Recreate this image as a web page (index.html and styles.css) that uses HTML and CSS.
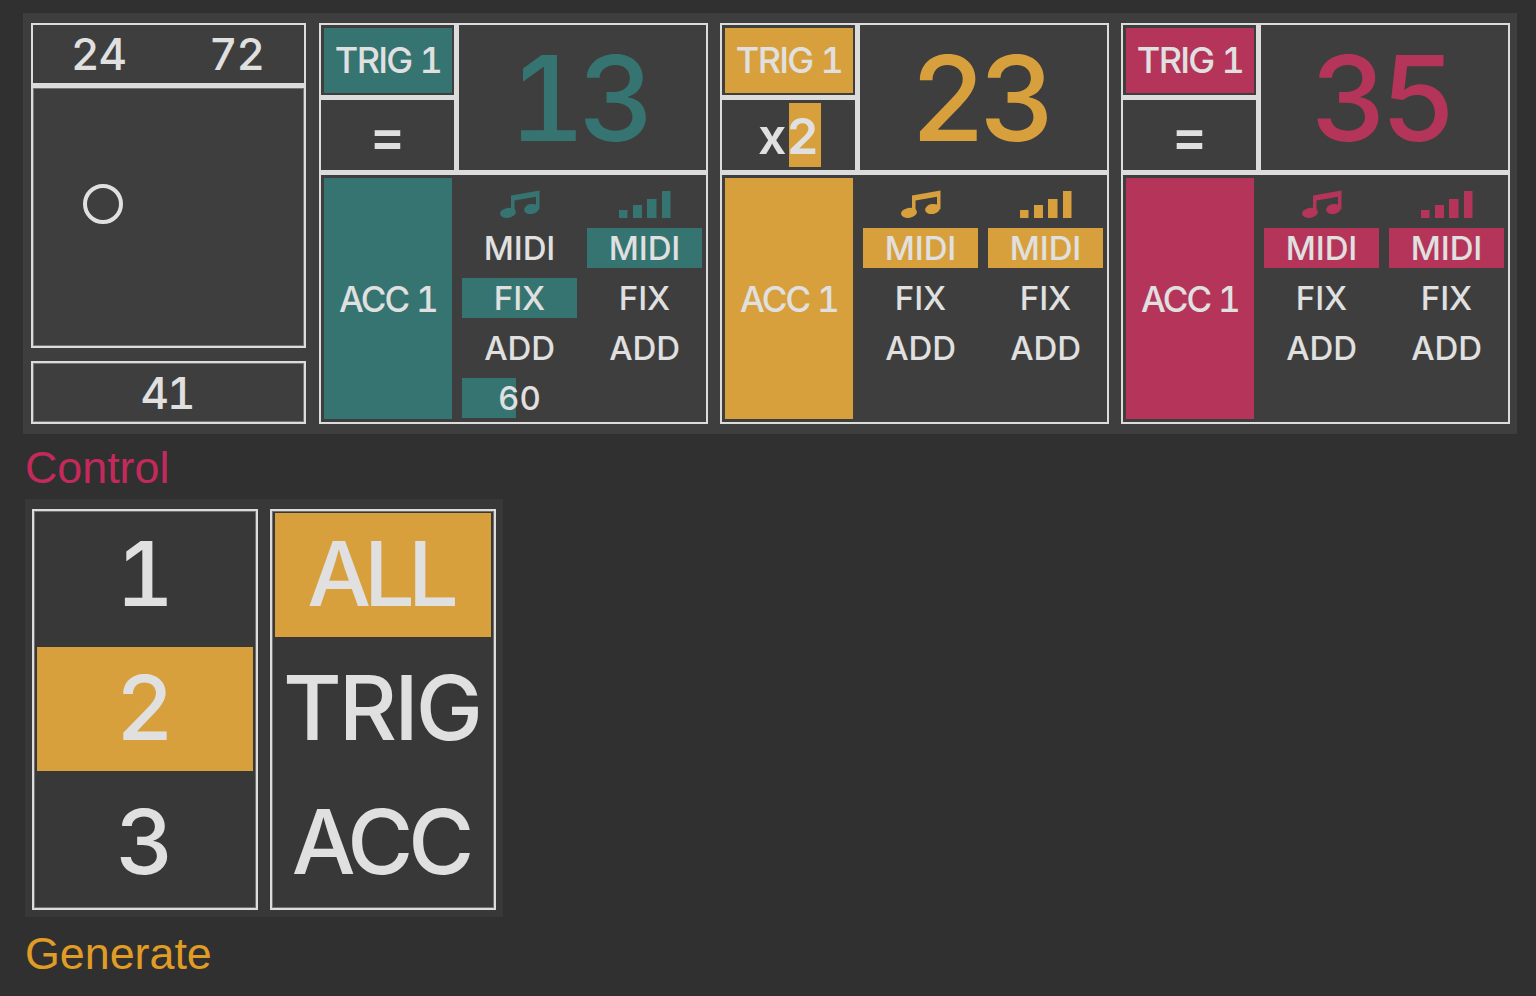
FILE: index.html
```html
<!DOCTYPE html>
<html lang="en">
<head>
  <meta charset="UTF-8" />
  <meta name="viewport" content="width=device-width, initial-scale=1.0"/>
  <title>Control / Generate</title>
  <link rel="stylesheet" href="styles.css">
</head>
<body>
  <svg class="defs" width="0" height="0">
    <symbol id="note" viewBox="0 0 40 28">
      <ellipse cx="8" cy="22.8" rx="8" ry="5" transform="rotate(-10 8 22.8)"/>
      <ellipse cx="31.5" cy="19" rx="7.5" ry="5" transform="rotate(-10 31.5 19)"/>
      <path d="M11 22V5.5L39.5 0.5V19H36V6.8L14.5 10.5V22Z"/>
    </symbol>
    <symbol id="bars" viewBox="0 0 52 28">
      <rect x="0" y="20" width="8.5" height="8"/>
      <rect x="14" y="15" width="9" height="13"/>
      <rect x="28" y="9" width="9.5" height="19"/>
      <rect x="43" y="1" width="8.5" height="27"/>
    </symbol>
  </svg>

  <section class="panel control-panel">
    <div class="side">
      <div class="range"><span>24</span><span>72</span></div>
      <div class="xy"><span class="xy-dot"></span></div>
      <div class="value">41</div>
    </div>

    <div class="track teal">
      <div class="track-top">
        <div class="trig-col">
          <div class="trig-cell"><div class="trig">TRIG 1</div></div>
          <div class="mult">=</div>
        </div>
        <div class="count">13</div>
      </div>
      <div class="track-bottom">
        <div class="acc">ACC 1</div>
        <div class="opts">
          <svg class="icon icon-note"><use href="#note"/></svg>
          <svg class="icon icon-bars"><use href="#bars"/></svg>
          <div class="opt">MIDI</div>
          <div class="opt on">MIDI</div>
          <div class="opt on">FIX</div>
          <div class="opt">FIX</div>
          <div class="opt">ADD</div>
          <div class="opt">ADD</div>
          <div class="opt slider"><span class="slider-fill" style="width: 47%"></span><span class="slider-num">60</span></div>
        </div>
      </div>
    </div>

    <div class="track orange">
      <div class="track-top">
        <div class="trig-col">
          <div class="trig-cell"><div class="trig">TRIG 1</div></div>
          <div class="mult"><span class="mult-fill"></span><span class="mult-num">x2</span></div>
        </div>
        <div class="count">23</div>
      </div>
      <div class="track-bottom">
        <div class="acc">ACC 1</div>
        <div class="opts">
          <svg class="icon icon-note"><use href="#note"/></svg>
          <svg class="icon icon-bars"><use href="#bars"/></svg>
          <div class="opt on">MIDI</div>
          <div class="opt on">MIDI</div>
          <div class="opt">FIX</div>
          <div class="opt">FIX</div>
          <div class="opt">ADD</div>
          <div class="opt">ADD</div>
        </div>
      </div>
    </div>

    <div class="track red">
      <div class="track-top">
        <div class="trig-col">
          <div class="trig-cell"><div class="trig">TRIG 1</div></div>
          <div class="mult">=</div>
        </div>
        <div class="count">35</div>
      </div>
      <div class="track-bottom">
        <div class="acc">ACC 1</div>
        <div class="opts">
          <svg class="icon icon-note"><use href="#note"/></svg>
          <svg class="icon icon-bars"><use href="#bars"/></svg>
          <div class="opt on">MIDI</div>
          <div class="opt on">MIDI</div>
          <div class="opt">FIX</div>
          <div class="opt">FIX</div>
          <div class="opt">ADD</div>
          <div class="opt">ADD</div>
        </div>
      </div>
    </div>
  </section>
  <div class="label label-control">Control</div>

  <section class="panel generate-panel">
    <div class="picker">
      <div class="pick">1</div>
      <div class="pick on">2</div>
      <div class="pick">3</div>
    </div>
    <div class="picker">
      <div class="pick on pick-all">ALL</div>
      <div class="pick">TRIG</div>
      <div class="pick pick-acc">ACC</div>
    </div>
  </section>
  <div class="label label-generate">Generate</div>
</body>
</html>
```

FILE: styles.css
```css
html, body {
  height: 996px;
  overflow: hidden;
}

body {
  margin: 0;
  padding-top: 13px;
  box-sizing: border-box;
  background: #303030;
  color: #e0e0e0;
  font-family: Inter, "Liberation Sans", sans-serif;
  font-variant-numeric: tabular-nums;
  font-weight: 500;
}

.defs {
  display: block;
  height: 0;
}

.teal { --accent: #357470; }
.orange { --accent: #d8a03c; }
.red { --accent: #b43559; }

.panel {
  display: flex;
  box-sizing: border-box;
}

.control-panel {
  margin-left: 23px;
  width: 1494px;
  height: 421px;
  padding: 10px 7px 10px 8px;
  gap: 12px;
  background: #3e3e3e;
}

.generate-panel {
  margin-left: 25px;
  width: 478px;
  height: 418px;
  padding: 10px 7px 7px 7px;
  gap: 12px;
  background: #383838;
  --accent: #d8a03c;
}

.label {
  font-family: "Liberation Sans", Arial, sans-serif;
  font-weight: 400;
  font-size: 44.8px;
  padding-left: 25px;
}

.label-control {
  height: 65px;
  line-height: 66px;
  color: #c4295c;
}

.label-generate {
  line-height: 72px;
  color: #e09c24;
}

/* left column */
.side {
  width: 275px;
  margin-right: 1px;
  display: flex;
  flex-direction: column;
}

.range {
  height: 60px;
  box-sizing: border-box;
  border: 2px solid #dcdcdc;
  border-bottom: 0;
  display: flex;
  justify-content: space-between;
  align-items: center;
  padding: 0 40px 0 38px;
  font-size: 44px;
  letter-spacing: -1px;
}

.xy {
  position: relative;
  height: 265px;
  box-sizing: border-box;
  border: 2px solid #dcdcdc;
  border-top-width: 5px;
  box-shadow: inset 0 0 0 1px rgba(220, 220, 220, 0.35);
}

.xy-dot {
  position: absolute;
  left: 50px;
  top: 96px;
  width: 40px;
  height: 40px;
  box-sizing: border-box;
  border: 4px solid #e0e0e0;
  border-radius: 50%;
}

.value {
  margin-top: 13px;
  height: 63px;
  box-sizing: border-box;
  border: 2px solid #dcdcdc;
  padding-right: 3px;
  display: flex;
  justify-content: center;
  align-items: center;
  font-size: 44px;
  letter-spacing: -2px;
  box-shadow: inset 0 0 0 1px rgba(220, 220, 220, 0.35);
}

/* tracks */
.track {
  width: 389px;
  box-sizing: border-box;
  border: 2px solid #dcdcdc;
  display: flex;
  flex-direction: column;
}

.track-top {
  height: 145px;
  flex: none;
  display: flex;
  border-bottom: 5px solid #dcdcdc;
}

.trig-col {
  width: 133px;
  flex: none;
  border-right: 5px solid #dcdcdc;
  display: flex;
  flex-direction: column;
}

.trig-cell {
  height: 75px;
  flex: none;
  padding: 3px 2px 0 3px;
  box-sizing: border-box;
  border-bottom: 5px solid #dcdcdc;
}

.trig {
  height: 65px;
  box-sizing: border-box;
  padding-bottom: 2px;
  background: var(--accent);
  display: flex;
  justify-content: center;
  align-items: center;
  font-size: 36px;
  letter-spacing: -1.7px;
}

.mult {
  position: relative;
  flex: 1;
  display: flex;
  justify-content: center;
  align-items: center;
  font-size: 54px;
  font-weight: 600;
}

.mult-fill {
  position: absolute;
  left: 67px;
  top: 3px;
  width: 32px;
  height: 64px;
  background: var(--accent);
}

.mult-num {
  position: relative;
  top: 1px;
  font-size: 50px;
}

.count {
  flex: 1;
  padding-right: 8px;
  display: flex;
  justify-content: center;
  align-items: center;
  font-size: 118px;
  letter-spacing: -7px;
  color: var(--accent);
}

.track-bottom {
  flex: 1;
  min-height: 0;
  display: flex;
  padding: 3px;
  gap: 10px;
}

.acc {
  width: 128px;
  background: var(--accent);
  display: flex;
  justify-content: center;
  align-items: center;
  font-size: 35px;
  letter-spacing: -1.8px;
}

.opts {
  flex: 1;
  display: grid;
  grid-template-columns: 115px 115px;
  grid-template-rows: 40px repeat(4, 40px);
  gap: 10px;
  align-content: start;
}

.icon {
  fill: var(--accent);
  height: 28px;
  align-self: end;
  justify-self: center;
}

.icon-note { width: 40px; }
.icon-bars { width: 52px; }

.opt {
  position: relative;
  display: flex;
  justify-content: center;
  align-items: center;
  font-size: 33px;
  letter-spacing: -0.1px;
}

.opt.on {
  background: var(--accent);
}

.slider-fill {
  position: absolute;
  left: 0;
  top: 0;
  bottom: 0;
  background: var(--accent);
}

.slider-num {
  position: relative;
  letter-spacing: 0;
}

/* generate pickers */
.picker {
  width: 226px;
  box-sizing: border-box;
  border: 2px solid #dcdcdc;
  padding: 2px 3px 3px 3px;
  display: flex;
  flex-direction: column;
  gap: 10px;
  box-shadow: inset 0 0 0 1px rgba(220, 220, 220, 0.35);
}

.pick {
  height: 124px;
  padding: 0 3px 4px 0;
  box-sizing: border-box;
  display: flex;
  justify-content: center;
  align-items: center;
  font-size: 90px;
  letter-spacing: -3px;
}

.pick-all {
  padding-right: 7px;
  letter-spacing: -7px;
}

.pick-acc {
  padding-right: 5px;
  letter-spacing: -5px;
}

.pick.on {
  background: var(--accent);
}
```
